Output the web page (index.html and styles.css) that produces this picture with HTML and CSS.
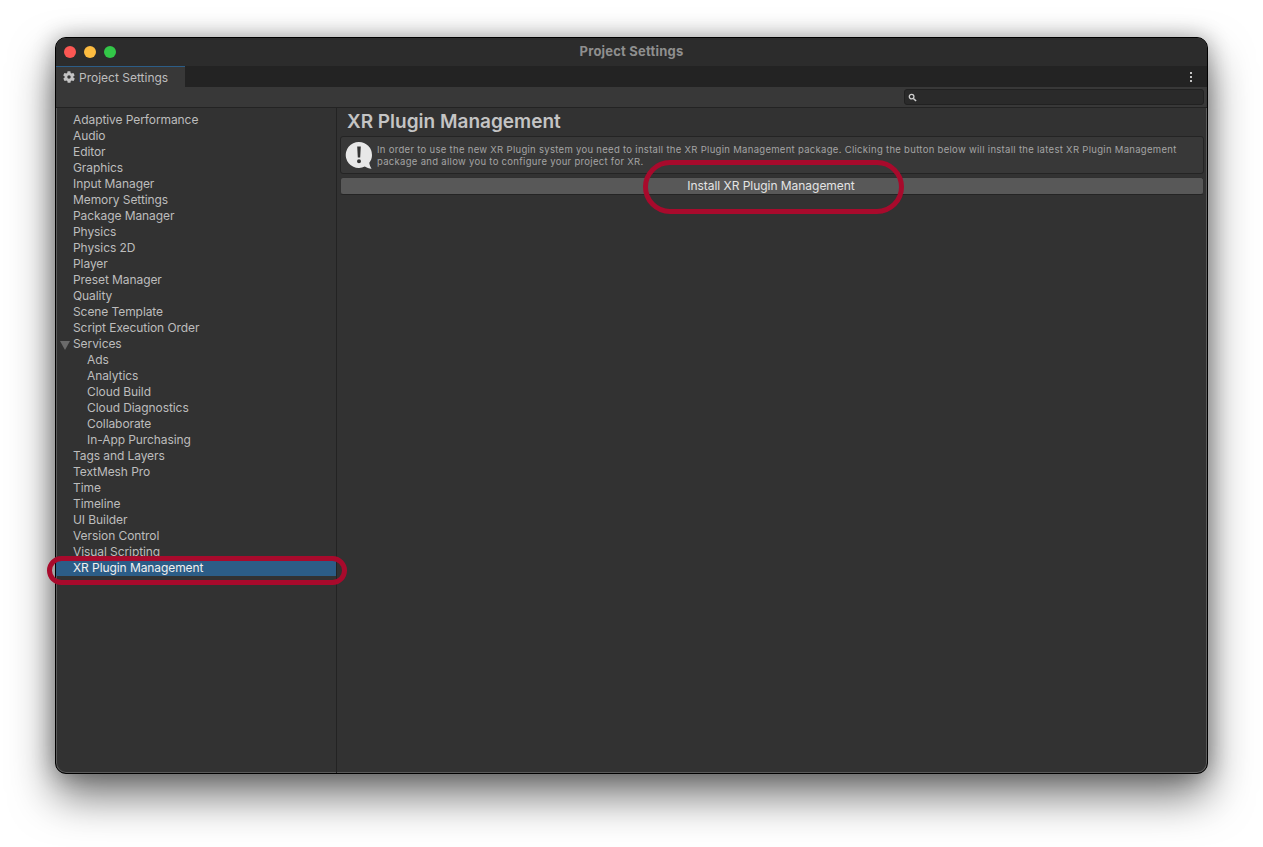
FILE: index.html
```html
<!DOCTYPE html>
<html lang="en">
<head>
  <meta charset="UTF-8">
  <meta name="viewport" content="width=device-width, initial-scale=1.0">
  <title>Project Settings</title>
  <link rel="stylesheet" href="styles.css">
</head>
<body>
  <div class="window">
    <!-- Title bar -->
    <div class="titlebar">
      <div class="lights">
        <span class="light red"></span>
        <span class="light yellow"></span>
        <span class="light green"></span>
      </div>
      <span class="window-title">Project Settings</span>
    </div>

    <!-- Tab strip -->
    <div class="tabstrip">
      <div class="tab">
        <svg class="gear" width="14" height="14" viewBox="0 0 24 24"><path fill="#c4c4c4" fill-rule="evenodd" d="M19.4 13c.1-.3.1-.7.1-1s0-.7-.1-1l2.1-1.600c.2-.2.2-.4.100-.6l-2-3.500c-.1-.2-.4-.3-.6-.2l-2.500 1c-.5-.4-1.100-.7-1.700-1l-.4-2.700c0-.2-.2-.4-.5-.4h-4c-.2 0-.5.200-.5.400l-.4 2.700c-.6.200-1.200.6-1.700 1l-2.500-1c-.2-.1-.5 0-.6.200l-2 3.500c-.1.200-.1.400.1.600L4.600 11c0 .3-.1.700-.1 1s0 .7.100 1l-2.100 1.600c-.2.200-.2.400-.1.600l2 3.500c.1.200.4.300.6.200l2.500-1c.5.400 1.100.7 1.700 1l.4 2.700c0 .2.300.4.500.4h4c.3 0 .5-.2.500-.4l.4-2.700c.6-.3 1.200-.6 1.700-1l2.500 1c.2.100.5 0 .6-.2l2-3.500c.1-.2.100-.4-.1-.6L19.400 13zM12 15a3 3 0 1 1 0-6 3 3 0 0 1 0 6z"/></svg>
        <span>Project Settings</span>
      </div>
      <div class="kebab"><i></i><i></i><i></i></div>
    </div>

    <!-- Search toolbar -->
    <div class="toolbar">
      <div class="search">
        <svg width="9" height="9" viewBox="0 0 10 10"><circle cx="4" cy="4" r="2.600" fill="none" stroke="#d0d0d0" stroke-width="1.400"/><path d="M6 6l3 3" stroke="#d0d0d0" stroke-width="1.600"/></svg>
      </div>
    </div>

    <div class="main">
      <ul class="sidebar">
        <li>Adaptive Performance</li>
        <li>Audio</li>
        <li>Editor</li>
        <li>Graphics</li>
        <li>Input Manager</li>
        <li>Memory Settings</li>
        <li>Package Manager</li>
        <li>Physics</li>
        <li>Physics 2D</li>
        <li>Player</li>
        <li>Preset Manager</li>
        <li>Quality</li>
        <li>Scene Template</li>
        <li>Script Execution Order</li>
        <li class="parent">Services</li>
        <li class="child">Ads</li>
        <li class="child">Analytics</li>
        <li class="child">Cloud Build</li>
        <li class="child">Cloud Diagnostics</li>
        <li class="child">Collaborate</li>
        <li class="child">In-App Purchasing</li>
        <li>Tags and Layers</li>
        <li>TextMesh Pro</li>
        <li>Time</li>
        <li>Timeline</li>
        <li>UI Builder</li>
        <li>Version Control</li>
        <li>Visual Scripting</li>
        <li class="selected">XR Plugin Management</li>
      </ul>

      <div class="content">
        <h1>XR Plugin Management</h1>
        <div class="helpbox">
          <svg class="help-icon" width="28" height="29" viewBox="0 0 28 29">
            <path fill="#e8e8e8" d="M14 1a13 13 0 0 1 13 13c0 3-1 5.700-2.700 7.800.2 2 1 4.200 2.300 6-2.700-.3-5-1.200-6.800-2.300A13 13 0 1 1 14 1z"/>
            <path fill="#333" d="M12.200 5.500h3.600l-.6 11h-2.400zM14 18.300a2 2 0 1 1 0 4 2 2 0 0 1 0-4z"/>
          </svg>
          <p>In order to use the new XR Plugin system you need to install the XR Plugin Management package. Clicking the button below will install the latest XR Plugin Management package and allow you to configure your project for XR.</p>
        </div>
        <button class="install-btn">Install XR Plugin Management</button>
      </div>
    </div>

    <!-- Red annotation rings drawn over the screenshot -->
    <div class="ring ring-side"></div>
    <div class="ring ring-btn"></div>
  </div>
</body>
</html>
```

FILE: styles.css
```css
html, body {
  margin: 0;
  padding: 0;
  height: 847px;
  overflow: hidden;
  background: #fff;
  font-family: Inter, "Liberation Sans", sans-serif;
}
.window {
  position: relative;
  box-sizing: border-box;
  width: 1153px;
  height: 737px;
  margin: 37px 0 0 55px;
  display: flex;
  flex-direction: column;
  background: #323232;
  border: 1px solid #000;
  border-radius: 11px;
  box-shadow: inset 0 0 0 1px #5a5a5a, 0 22px 44px rgba(0, 0, 0, 0.55), 0 0 22px rgba(0, 0, 0, 0.3);
}
.titlebar {
  position: relative;
  height: 28px;
  box-sizing: border-box;
  padding-bottom: 2px;
  flex: none;
  display: flex;
  align-items: center;
  justify-content: center;
  background: #2c2c2c;
  border-radius: 10px 10px 0 0;
}
.window-title {
  font-size: 13px;
  font-weight: 700;
  letter-spacing: 0.2px;
  color: #8f8f8f;
}
.lights {
  position: absolute;
  left: 8px;
  top: 8px;
  display: flex;
  gap: 8px;
}
.light {
  width: 12px;
  height: 12px;
  border-radius: 50%;
}
.light.red { background: #fc5753; }
.light.yellow { background: #fdbc40; }
.light.green { background: #33c748; }
.tabstrip {
  height: 21px;
  flex: none;
  display: flex;
  justify-content: space-between;
  background: #232323;
}
.tab {
  width: 129px;
  box-sizing: border-box;
  display: flex;
  align-items: center;
  gap: 3px;
  padding-left: 6px;
  font-size: 12px;
  color: #bdbdbd;
  background: #383838;
  border-top: 1px solid #2c5d87;
}
.kebab {
  display: flex;
  flex-direction: column;
  justify-content: center;
  gap: 2px;
  padding-right: 15px;
}
.kebab i {
  display: block;
  width: 2px;
  height: 2px;
  background: #c4c4c4;
}
.toolbar {
  height: 21px;
  flex: none;
  box-sizing: border-box;
  display: flex;
  align-items: center;
  justify-content: flex-end;
  padding-right: 3px;
  background: #383838;
  border-bottom: 1px solid #232323;
}
.search {
  width: 300px;
  height: 16px;
  box-sizing: border-box;
  display: flex;
  align-items: center;
  padding-left: 3px;
  background: #2a2a2a;
  border: 1px solid #212121;
  border-radius: 3px;
}
.main {
  flex: 1;
  display: flex;
  min-height: 0;
}
.sidebar {
  width: 281px;
  flex: none;
  box-sizing: border-box;
  margin: 0;
  padding: 4px 0 0;
  list-style: none;
  border-right: 1px solid #232323;
}
.sidebar li {
  height: 16px;
  line-height: 16px;
  padding-left: 17px;
  font-size: 12px;
  letter-spacing: -0.08px;
  color: #bdbdbd;
}
.sidebar li.child {
  padding-left: 31px;
}
.sidebar li.parent {
  position: relative;
}
.sidebar li.parent::before {
  content: "";
  position: absolute;
  left: 4px;
  top: 5px;
  border-left: 5px solid transparent;
  border-right: 5px solid transparent;
  border-top: 9px solid #6b6b6b;
}
.sidebar li.selected {
  background: #2c5d87;
  color: #f0f0f0;
}
.content {
  flex: 1;
  min-width: 0;
  padding: 0 3px;
}
h1 {
  margin: 0;
  height: 28px;
  line-height: 27px;
  padding-left: 7px;
  font-size: 19px;
  font-weight: 600;
  color: #c4c4c4;
}
.helpbox {
  box-sizing: border-box;
  height: 38px;
  display: flex;
  align-items: center;
  gap: 4px;
  padding: 0 6px 0 4px;
  background: #383838;
  border: 1px solid #242424;
  border-radius: 3px;
}
.help-icon {
  flex: none;
}
.helpbox p {
  margin: 0;
  padding-top: 2px;
  font-size: 9.5px;
  line-height: 12px;
  letter-spacing: 0.3px;
  color: #a4a4a4;
}
.install-btn {
  display: block;
  width: 100%;
  height: 18px;
  margin-top: 3px;
  padding: 0 2px 2px 0;
  font-family: inherit;
  font-size: 12px;
  letter-spacing: -0.04px;
  color: #e4e4e4;
  background: #585858;
  border: 1px solid #303030;
  border-bottom-color: #242424;
  border-radius: 3px;
}
.ring {
  position: absolute;
  box-sizing: border-box;
  border: 5px solid #a80a2c;
}
.ring-side {
  left: -9px;
  top: 518px;
  width: 300px;
  height: 29px;
  border-radius: 15px;
}
.ring-btn {
  left: 587px;
  top: 122px;
  width: 261px;
  height: 54px;
  border-radius: 27px;
}
```
